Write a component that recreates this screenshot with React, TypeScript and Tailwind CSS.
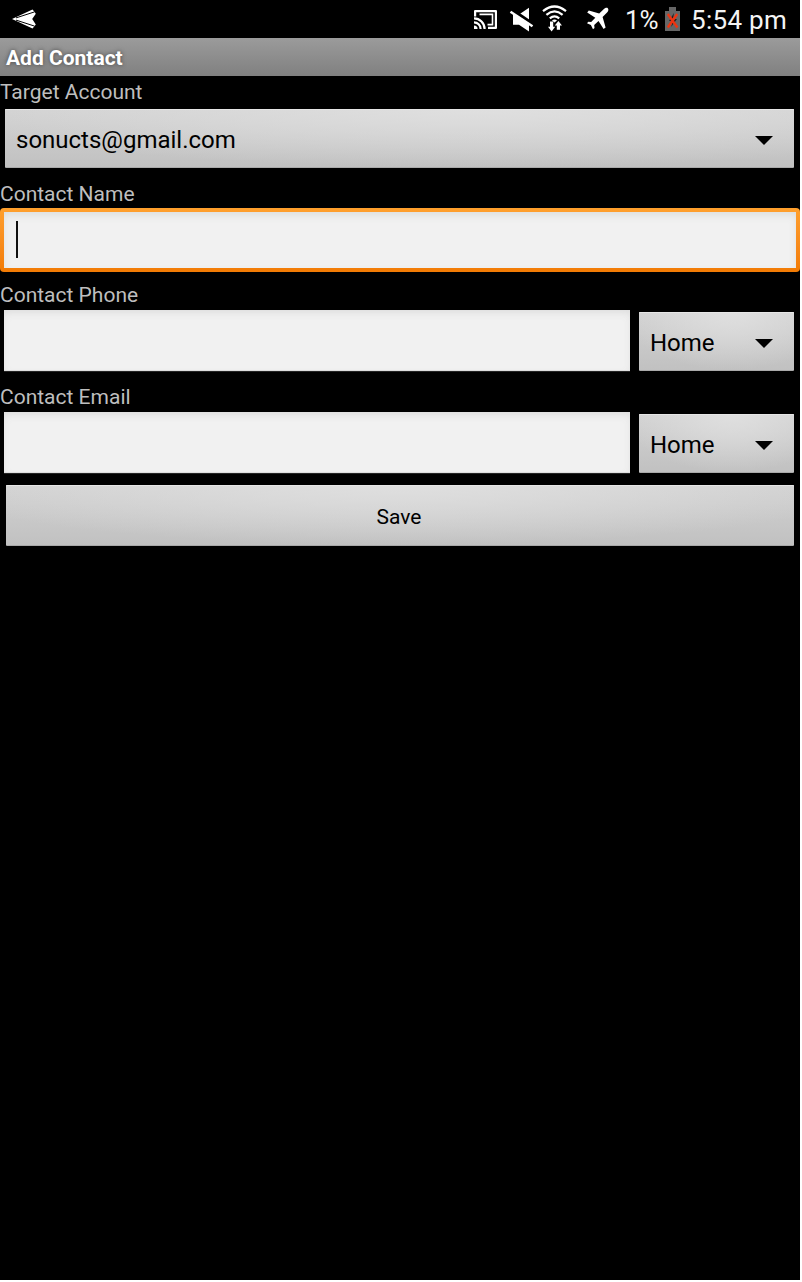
import type { ReactNode } from "react";

function StatusBar() {
  return (
    <div className="flex h-[38px] items-center bg-black pl-3 pr-[12px] text-[26px] leading-[38px] text-[#f4f4f4]">
      <svg className="h-5 w-6 shrink-0" viewBox="0 0 24 20">
        <path d="M0 10 L20.5 0.4 L21.8 2 L23.8 4.8 L20.2 10 L23.8 15.4 L21.8 18 L20.5 19.6 Z" fill="#fff" />
        <path d="M4 8.9 L22.5 2.9 M4 11.1 L22.5 17.1" stroke="#000" strokeWidth="1" />
      </svg>
      <div className="ml-auto flex items-center">
        <svg className="h-[38px] w-[24px]" viewBox="473 0 24 38" fill="none" stroke="#fff">
          <path d="M475.1 16.5 V11.1 H495.9 V27.9 H488" strokeWidth="2.2" strokeLinejoin="round" />
          <path d="M479.5 14.4 H492.5 V24.6 H487.5" strokeWidth="1.6" />
          <path d="M474 18.4 A10.6 10.6 0 0 1 484.6 29 M474 22.4 A6.6 6.6 0 0 1 480.6 29" strokeWidth="2.2" />
          <path d="M474 25.4 A3.6 3.6 0 0 1 477.6 29 H474 Z" fill="#fff" stroke="none" />
        </svg>
        <svg className="ml-[12px] h-[38px] w-[25px]" viewBox="509 0 25 38">
          <path d="M513 14.5 H519 L529 7.7 V31.5 L519 24.8 H513 Z" fill="#fff" />
          <path d="M511 9.2 L534 24.7" stroke="#000" strokeWidth="3.4" />
          <path d="M510.5 11.8 L532.5 26.3" stroke="#fff" strokeWidth="2.4" />
        </svg>
        <svg className="ml-[8px] h-[38px] w-[26px]" viewBox="542 0 26 38" fill="none" stroke="#fff" strokeWidth="2.2">
          <path d="M543 11.2 Q554.5 1.8 566 11.2 M546.4 14.8 Q554.5 8 562.6 14.8 M549.8 18.3 Q554.5 14.4 559.2 18.3" />
          <path d="M552 20.6 Q554.5 18.5 557 20.6 L554.5 22.5 Z" fill="#fff" stroke="none" />
          <path d="M550 21.5 H553.2 V26.8 H555.2 L551.6 31.5 L548 26.8 H550 Z M556.8 29.8 V25.4 H554.8 L558.4 21 L562 25.4 H560 V29.8 Z" fill="#fff" stroke="none" />
        </svg>
        <svg className="ml-[18px] h-[38px] w-[24px]" viewBox="586 0 24 38" fill="#fff">
          <path d="M607.8 8.2 C609 9.2 608.2 11.4 606.8 12.8 L602.6 17 L605.6 27.4 L603.6 29 L598.5 20.9 L594.2 25 L594.5 28 L593 29.2 L590.9 25.1 L587 23.3 L588.3 21.8 L591.2 22 L595.3 17.7 L587.2 12.6 L588.8 10.6 L599.2 13.5 L603.4 9.4 C604.8 8 606.8 7.2 607.8 8.2 Z" />
        </svg>
        <span className="ml-[15px] w-[35px] whitespace-nowrap pt-[2px] tracking-[-0.2px]">1%</span>
        <svg className="ml-[5px] h-[38px] w-[15px]" viewBox="665 0 15 38">
          <path d="M665 11 H669 V7 H676 V11 H680 V31 H665 Z" fill="#666" />
          <path d="M674 13 L669 21 H673 L671 27 L677 19 H673 Z" fill="#222" />
          <path d="M667.8 14 L677.4 27.5 M677.2 14 L667.8 27.5" stroke="#ed3410" strokeWidth="2.4" />
        </svg>
        <span className="ml-[11px] w-[97px] whitespace-nowrap pt-[2px] tracking-[0.3px]">5:54 pm</span>
      </div>
    </div>
  );
}

function Label({ children }: { children: ReactNode }) {
  return <div className="h-[30px] text-[21px] leading-[33px] text-[#bebebe]">{children}</div>;
}

function Spinner({ value }: { value: string }) {
  return (
    <button
      className="flex h-[59px] w-full items-center justify-between rounded-[1px] border-b border-[#a9a9a9] bg-[radial-gradient(ellipse_70%_100%_at_60%_0%,#dfdfdf,transparent),linear-gradient(#d2d2d2,#c1c1c1)] pl-[11px] pr-[21px] pt-[3px] text-[24px] text-black shadow-[inset_0_1px_0_#e6e6e6]"
    >
      <span>{value}</span>
      <svg className="mt-[2px] h-[9px] w-[18px]" viewBox="0 0 18 9">
        <path d="M0 0 H18 L9 9 Z" />
      </svg>
    </button>
  );
}

function Field({ label }: { label: string }) {
  return (
    <div className="flex items-end pl-1 pr-[6px]">
      <input
        aria-label={label}
        className="h-[61px] w-[626px] border-b border-[#dedede] bg-[#f1f1f1] px-3 text-[24px] shadow-[inset_0_4px_8px_-2px_#dadada,0_1px_0_#252525] outline-none"
      />
      <div className="ml-[9px] w-[155px]">
        <Spinner value="Home" />
      </div>
    </div>
  );
}

export default function App() {
  return (
    <div className="h-[1282px] w-[802px] bg-white">
      <main className="h-[1280px] w-[800px] overflow-hidden bg-black font-[Roboto,sans-serif]">
        <StatusBar />
        <h1 className="h-[38px] bg-linear-to-b from-[#9b9b9b] to-[#808080] pl-[6px] text-[21px] font-bold leading-[41px] text-white [text-shadow:0_0_4px_#444]">
          Add Contact
        </h1>
        <Label>Target Account</Label>
        <div className="mt-[3px] pl-[5px] pr-[6px]">
          <Spinner value="sonucts@gmail.com" />
        </div>
        <div className="mt-[10px]">
          <Label>Contact Name</Label>
        </div>
        <div className="h-[64px] rounded-[4px] bg-linear-to-b from-[#ffa02d] to-[#f27b04] p-1">
          <div className="h-full bg-[#f1f1f1] pl-[12px] pt-[9px] shadow-[inset_0_4px_10px_-2px_#d8dad8]">
            <div className="h-[37px] w-[2px] bg-[#111]" />
          </div>
        </div>
        <div className="mt-[7px] pb-px">
          <Label>Contact Phone</Label>
        </div>
        <Field label="Contact Phone" />
        <div className="mt-[10px] pb-px">
          <Label>Contact Email</Label>
        </div>
        <Field label="Contact Email" />
        <div className="mt-[12px] px-[6px]">
          <button className="block h-[61px] w-full rounded-[1px] border-b border-[#a9a9a9] bg-[radial-gradient(ellipse_60%_100%_at_50%_0%,#dfdfdf,transparent),linear-gradient(#d2d2d2,#c1c1c1)] pr-[2px] pt-[5px] text-[21px] text-black shadow-[inset_0_1px_0_#e6e6e6]">
            Save
          </button>
        </div>
      </main>
    </div>
  );
}
